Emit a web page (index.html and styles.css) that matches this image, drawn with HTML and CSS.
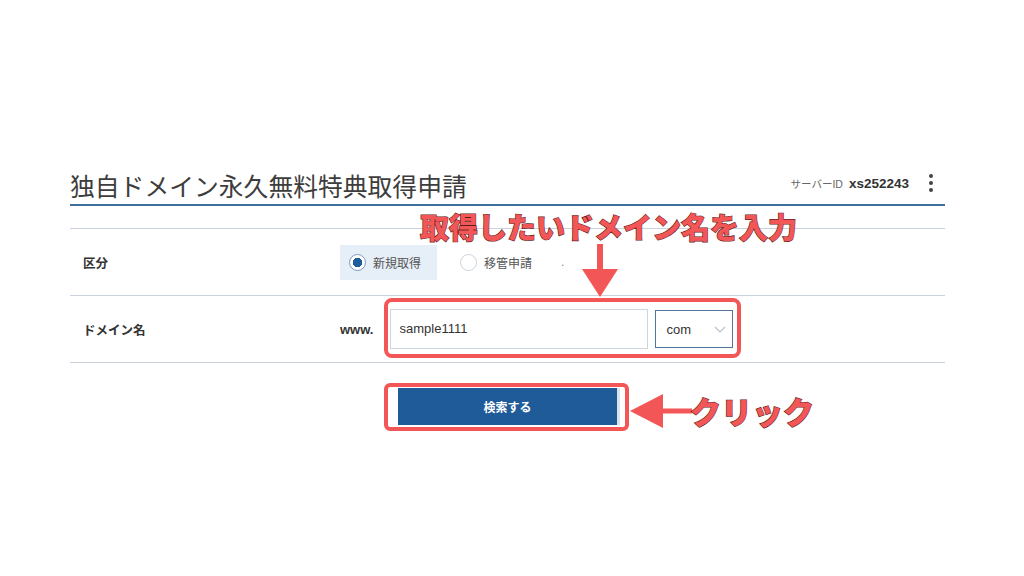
FILE: index.html
```html
<html lang="ja">

<head>
  <meta charset="UTF-8">
  <meta name="viewport" content="width=device-width, initial-scale=1.0">
  <link rel="stylesheet" href="styles.css">
</head>

<body>
  <div id="page">
    <div class="head">
      <h1>独自ドメイン永久無料特典取得申請</h1>
      <div class="server">
        <span class="server-label">サーバーID</span>
        <span class="server-id">xs252243</span>
        <span class="kebab"><i></i><i></i><i></i></span>
      </div>
    </div>

    <div class="form">
      <div class="row">
        <div class="label">区分</div>
        <div class="field">
          <label class="radio checked"><span class="circle"></span>新規取得</label>
          <label class="radio"><span class="circle"></span>移管申請</label>
          <span class="dot">.</span>
        </div>
      </div>
      <div class="row">
        <div class="label">ドメイン名</div>
        <div class="field">
          <span class="www">www.</span>
          <div class="input">sample1111</div>
          <div class="select">com
            <svg width="12" height="7" viewBox="0 0 12 7"><path d="M1 1l5 5 5-5" fill="none" stroke="#b9c2cc" stroke-width="1.2"/></svg>
          </div>
        </div>
      </div>
    </div>

    <div class="actions">
      <button class="search">検索する</button>
    </div>

    <!-- 注釈 -->
    <div class="note note-top">取得したいドメイン名を入力</div>
    <svg class="arrow-down" width="36" height="53" viewBox="0 0 36 53">
      <rect x="15" y="0" width="6" height="26" fill="#f25656"/>
      <polygon points="0,25 36,25 18,53" fill="#f25656"/>
    </svg>
    <div class="mark mark-domain"></div>
    <div class="mark mark-btn"></div>
    <svg class="arrow-left" width="62" height="34" viewBox="0 0 62 34">
      <polygon points="0,17 33,0 33,34" fill="#f25656"/>
      <rect x="32" y="14.5" width="30" height="5" fill="#f25656"/>
    </svg>
    <div class="note note-click">クリック</div>
  </div>
</body>

</html>
```

FILE: styles.css
```css
body {
  margin: 0;
  padding: 0;
  background: #fff;
  font-family: "Liberation Sans", "Noto Sans CJK JP", sans-serif;
  color: #333;
}

#page {
  position: relative;
  margin-left: 70px;
  width: 875px;
  padding-top: 166px;
}

.head {
  display: flex;
  justify-content: space-between;
  align-items: center;
  height: 38px;
  border-bottom: 2px solid #3f6d9e;
}

.head h1 {
  margin: 0;
  font-family: "Noto Sans CJK JP", sans-serif;
  font-size: 24.8px;
  font-weight: 400;
  line-height: 34px;
  color: #3d3d3d;
}

.server {
  display: flex;
  align-items: center;
  margin-top: -4px;
}

.server-label {
  font-size: 10.5px;
  color: #666;
  margin-right: 6px;
}

.server-id {
  font-size: 13.5px;
  font-weight: bold;
  color: #333;
}

.kebab {
  display: flex;
  flex-direction: column;
  gap: 3px;
  margin-left: 20px;
  margin-right: 12px;
}

.kebab i {
  width: 4px;
  height: 4px;
  border-radius: 50%;
  background: #444;
}

.form {
  margin-top: 22px;
  border-top: 1px solid #cad3dd;
}

.row {
  display: flex;
  align-items: center;
  height: 66px;
  border-bottom: 1px solid #cad3dd;
}

.label {
  width: 257px;
  padding-left: 13px;
  font-size: 12.5px;
  font-weight: bold;
  color: #333;
}

.field {
  display: flex;
  align-items: center;
}

.radio {
  display: flex;
  align-items: center;
  gap: 7px;
  height: 35px;
  padding: 0 16px 0 9px;
  font-size: 12px;
  color: #555;
}

.radio + .radio {
  margin-left: 14px;
}

.radio.checked {
  background: #e6eef7;
}

.circle {
  box-sizing: border-box;
  width: 17px;
  height: 17px;
  border: 1.5px solid #c9d2dc;
  border-radius: 50%;
  background: #fff;
}

.checked .circle {
  border-color: #7a9cc0;
  background: radial-gradient(circle, #1f5c9c 0 4.5px, #fff 5px);
}

.dot {
  margin-left: 13px;
  font-size: 12px;
  color: #888;
}

.www {
  font-size: 13px;
  font-weight: bold;
  color: #333;
  margin-right: 17px;
}

.input {
  box-sizing: border-box;
  width: 258px;
  height: 40px;
  padding-left: 8px;
  line-height: 38px;
  border: 1px solid #cdd5de;
  font-size: 13px;
  color: #333;
}

.select {
  box-sizing: border-box;
  display: flex;
  align-items: center;
  justify-content: space-between;
  width: 78px;
  height: 38px;
  margin-left: 7px;
  padding: 0 6px 0 10px;
  border: 1px solid #52749c;
  font-size: 13px;
  color: #333;
}

.actions {
  padding: 25px 0 0 320px;
}

.search {
  display: block;
  width: 230px;
  height: 37px;
  border: 0;
  border-left: 8px solid #fff;
  border-right: 3px solid #dbe2ea;
  background: #1f5a99;
  color: #fff;
  font-family: "Noto Sans CJK JP", sans-serif;
  font-size: 12px;
  font-weight: bold;
}

.note {
  position: absolute;
  font-family: "Noto Sans CJK JP", sans-serif;
  font-weight: 900;
  color: #f25656;
  -webkit-text-stroke: 1.2px #5c1c1c;
  paint-order: stroke fill;
  white-space: nowrap;
  line-height: 1;
}

.note-top {
  left: 350px;
  top: 212px;
  font-size: 29px;
}

.note-click {
  left: 620px;
  top: 395px;
  font-size: 31px;
}

.arrow-down {
  position: absolute;
  left: 512px;
  top: 244px;
}

.arrow-left {
  position: absolute;
  left: 560px;
  top: 394px;
}

.mark {
  position: absolute;
  box-sizing: border-box;
  border: 4px solid #f25656;
}

.mark-domain {
  left: 314px;
  top: 298px;
  width: 357px;
  height: 60px;
  border-radius: 8px;
}

.mark-btn {
  left: 314px;
  top: 383px;
  width: 245px;
  height: 48px;
  border-radius: 6px;
}
```
